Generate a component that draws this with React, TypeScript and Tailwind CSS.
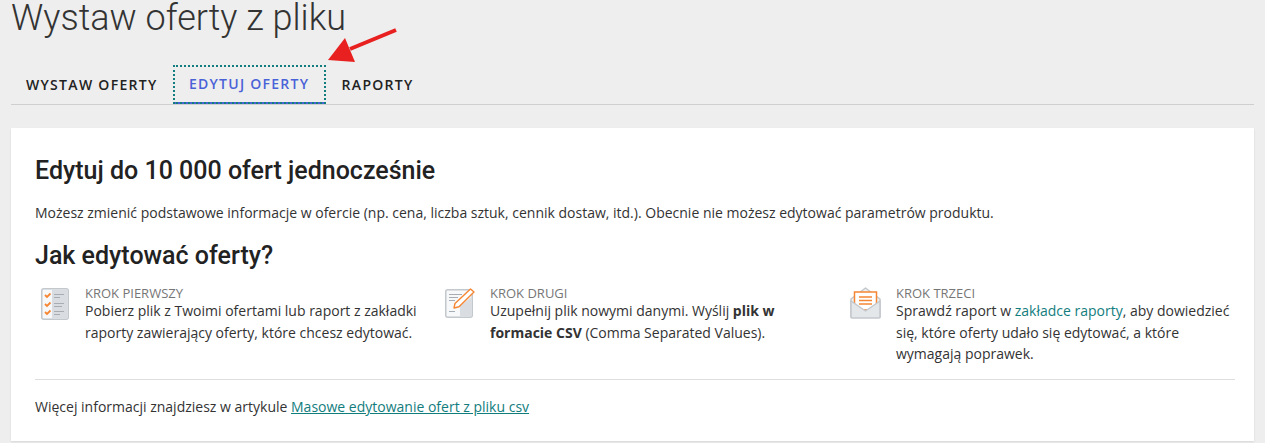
import React from 'react';

function ListIcon() {
    return (
        <svg width="28" height="32" viewBox="0 0 28 32" className="shrink-0">
            <rect x="0.75" y="0.75" width="26.5" height="30.5" rx="2" fill="#f7f8f9" stroke="#c3c8cd" strokeWidth="1.5" />
            <path d="M11 1.5h15.5v29H11z" fill="#d9dde2" />
            <path d="M4 7l2 2 3.5-3.5M4 16l2 2 3.5-3.5M4 24l2 2 3.5-3.5" fill="none" stroke="#f58634" strokeWidth="1.8" />
            <path d="M13 6.5h10M13 9.5h6M13 15.5h10M13 18.5h8M13 23.5h10M13 26.5h6" stroke="#a7adb3" strokeWidth="1.2" />
        </svg>
    );
}

function EditIcon() {
    return (
        <svg width="30" height="30" viewBox="0 0 30 30" className="-ml-[1px] shrink-0">
            <rect x="0.75" y="1.75" width="26.5" height="27.5" rx="2" fill="#f7f8f9" stroke="#c3c8cd" strokeWidth="1.5" />
            <path d="M15 18l11.5-9v19.5H15z" fill="#d9dde2" />
            <path d="M4 6.5h13M4 9.5h9M4 12.5h6M4 23.5h6" stroke="#a7adb3" strokeWidth="1.2" />
            <path d="M25.5 1L10 15.5 9 20l5-1.2L29 4z" fill="#fff" stroke="#f58634" strokeWidth="1.4" strokeLinejoin="round" />
        </svg>
    );
}

function MailIcon() {
    return (
        <svg width="31" height="32" viewBox="0 0 31 32" className="-ml-[2px] -mt-[1px] shrink-0">
            <path d="M1 12L15.5 1 30 12v18H1z" fill="#eef0f2" stroke="#c3c8cd" strokeWidth="1.5" strokeLinejoin="round" />
            <rect x="4.5" y="5" width="22" height="18" fill="#fff" stroke="#f58634" strokeWidth="1.5" />
            <path d="M9 10h13M9 13.5h13M9 17h13" stroke="#f58634" strokeWidth="1.5" />
            <path d="M1 14l14.5 10L30 14v16a1 1 0 01-1 1H2a1 1 0 01-1-1z" fill="#e4e7ea" stroke="#c3c8cd" strokeWidth="1.5" strokeLinejoin="round" />
        </svg>
    );
}

function Step({ icon, title, children, className }: { icon: React.ReactNode; title: string; children: React.ReactNode; className: string }) {
    return (
        <div className={`flex shrink-0 ${className}`}>
            <div className="w-[50px] shrink-0 pl-[6px] pt-[1px]">{icon}</div>
            <div className="whitespace-nowrap">
                <div className="text-[13px] font-medium leading-[13px] text-[#767676]">{title}</div>
                <div className="text-[14px] leading-[21.5px] text-[#333]">{children}</div>
            </div>
        </div>
    );
}

export default function App() {
    return (
        <div className="relative h-[443px] overflow-hidden bg-[#eeeeee] px-[11px] font-['Open_Sans',sans-serif] text-[#222]">
            <h1 className="h-[41px] font-['Roboto',sans-serif] text-[36px] font-light leading-[36px] text-[#333]">Wystaw oferty z pliku</h1>
            <div className="mt-[24px] flex h-[40px] border-b border-[#cfcfcf]">
                <div className="flex items-center pl-[15px] pr-[15px] text-[14px] font-semibold tracking-[1.3px] text-[#222]">WYSTAW OFERTY</div>
                <div className="flex h-[39px] w-[153px] items-center justify-center border-b-2 border-b-[#4a62d8] text-[14px] font-semibold tracking-[1.25px] text-[#4a62d8] outline-2 outline-dotted outline-offset-[-2px] outline-[#127d7d]">EDYTUJ OFERTY</div>
                <div className="flex items-center px-[16px] text-[14px] font-semibold tracking-[1.3px] text-[#222]">RAPORTY</div>
            </div>
            <div className="mt-[23px] h-[313px] bg-white pl-[24px] pr-[19px] pt-[27px] shadow-[0_1px_2px_rgba(0,0,0,0.1)]">
                <h2 className="font-['Roboto',sans-serif] text-[25px] font-medium leading-[32px]">Edytuj do 10 000 ofert jednocześnie</h2>
                <p className="mt-[15px] text-[14px] leading-[21px] text-[#333]">Możesz zmienić podstawowe informacje w ofercie (np. cena, liczba sztuk, cennik dostaw, itd.). Obecnie nie możesz edytować parametrów produktu.</p>
                <h2 className="mt-[17px] font-['Roboto',sans-serif] text-[25px] font-medium leading-[32px]">Jak edytować oferty?</h2>
                <div className="mt-[15px] flex h-[80px]">
                    <Step icon={<ListIcon />} title="KROK PIERWSZY" className="w-[405px]">Pobierz plik z Twoimi ofertami lub raport z zakładki<br />raporty zawierający oferty, które chcesz edytować.</Step>
                    <Step icon={<EditIcon />} title="KROK DRUGI" className="w-[406px]">Uzupełnij plik nowymi danymi. Wyślij <b>plik w<br />formacie CSV</b> (Comma Separated Values).</Step>
                    <Step icon={<MailIcon />} title="KROK TRZECI" className="w-[389px]"><span>Sprawdź raport w <a className="text-[#127d7d]">zakładce raporty</a>, aby dowiedzieć<br />się, które oferty udało się edytować, a które<br />wymagają poprawek.</span></Step>
                </div>
                <div className="mt-[12px] border-t border-[#dddddd] pt-[16px] text-[14px] leading-[21px] text-[#333]">
                    Więcej informacji znajdziesz w artykule <a className="text-[#127d7d] underline">Masowe edytowanie ofert z pliku csv</a>
                </div>
            </div>
            {/* annotation arrow */}
            <svg width="80" height="50" viewBox="0 0 80 50" className="absolute left-[325px] top-[24px]">
                <path d="M71 6L25 25" stroke="#e8201f" strokeWidth="4" />
                <path d="M3 36L20 14l10 24z" fill="#e8201f" />
            </svg>
        </div>
    );
}
